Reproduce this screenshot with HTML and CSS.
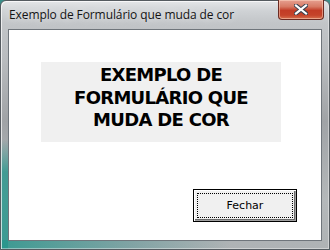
FILE: index.html
```html
<!DOCTYPE html>
<html lang="pt">
<head>
<meta charset="utf-8">
<title>Exemplo de Formulário que muda de cor</title>
<link rel="stylesheet" href="styles.css">
</head>
<body>
<div class="window">
  <div class="titlebar">
    <span class="title">Exemplo de Formulário que muda de cor</span>
    <button class="close" aria-label="Fechar">
      <svg width="14" height="11" viewBox="0 0 14 11">
        <path d="M2 1.5 L12 9.5 M12 1.5 L2 9.5" stroke="#3a4250" stroke-width="4.2" stroke-linecap="square"/>
        <path d="M2 1.5 L12 9.5 M12 1.5 L2 9.5" stroke="#ffffff" stroke-width="2.2" stroke-linecap="square"/>
      </svg>
    </button>
  </div>
  <div class="client">
    <div class="label">EXEMPLO DE<br>FORMULÁRIO QUE<br>MUDA DE COR</div>
    <button class="btn"><span class="focus">Fechar</span></button>
  </div>
</div>
</body>
</html>
```
FILE: styles.css
```css
html, body {
  margin: 0;
  padding: 0;
  width: 330px;
  height: 250px;
  overflow: hidden;
  background: #3a8f8a;
}
.window {
  box-sizing: border-box;
  width: 330px;
  height: 250px;
  padding: 0 7px 8px 7px;
  display: flex;
  flex-direction: column;
  border: 1px solid #555b60;
  border-radius: 6px 6px 0 0;
  background:
    linear-gradient(to right, rgba(40,150,140,0.85), rgba(60,140,140,0.4) 40%, rgba(150,155,160,0) 70%) left bottom / 100% 9px no-repeat,
    linear-gradient(to bottom, rgba(40,150,140,0) 0%, rgba(40,150,140,0.8) 30%, rgba(40,150,140,0.85) 100%) left bottom / 7px 110px no-repeat,
    linear-gradient(to bottom, #e4e6e8 0px, #cfd2d5 10px, #c2c5c8 22px, #b8bbbe 60px, #a0a3a6 120px, #b4b8ba 200px, #aeb2b4 250px);
  box-shadow: inset 1px 1px 0 rgba(255,255,255,0.7), inset -1px -1px 0 rgba(255,255,255,0.4);
}
.titlebar {
  height: 28px;
  display: flex;
  align-items: flex-start;
  justify-content: space-between;
  flex: none;
}
.title {
  font-family: "Open Sans", "Noto Sans", sans-serif;
  font-size: 12px;
  color: #141414;
  margin-top: 5px;
  margin-left: 1px;
  letter-spacing: -0.1px;
  text-shadow: 0 0 8px rgba(255,255,255,0.9);
}
.close {
  margin: -1px -2px 0 0;
  width: 46px;
  height: 20px;
  padding: 0;
  border: 1px solid #6b2a22;
  border-top: none;
  border-radius: 0 0 4px 4px;
  background: linear-gradient(to bottom, #e6a090 0%, #d77a64 35%, #c23c26 55%, #c5432a 80%, #d6704f 100%);
  box-shadow: inset 0 0 0 1px rgba(255,220,200,0.5);
  display: flex;
  align-items: center;
  justify-content: center;
}
.close svg { display: block; }
.client {
  flex: 1;
  background: #ffffff;
  border: 1px solid #6f757b;
  display: flex;
  flex-direction: column;
  align-items: flex-start;
  padding: 32px 0 0 32px;
}
.label {
  box-sizing: border-box;
  width: 240px;
  height: 80px;
  background: #f0f0f0;
  font-family: "DejaVu Sans", sans-serif;
  font-weight: bold;
  font-size: 18px;
  line-height: 22.5px;
  text-align: center;
  color: #000;
  padding-top: 2px;
  letter-spacing: -0.7px;
}
.btn {
  margin: 47px 0 0 152px;
  width: 104px;
  height: 33px;
  box-sizing: border-box;
  border: 1px solid #000;
  background: #f0f0f0;
  padding: 1px;
  box-shadow: inset 1px 1px 0 #fff, inset -1px -1px 0 #a0a0a0, inset -2px -2px 0 #696969;
  display: flex;
  font-family: "DejaVu Sans", sans-serif;
  font-size: 11px;
  color: #000;
}
.focus {
  flex: 1;
  margin: 2px;
  border: 1px dotted #000;
  display: flex;
  align-items: center;
  justify-content: center;
}
```
